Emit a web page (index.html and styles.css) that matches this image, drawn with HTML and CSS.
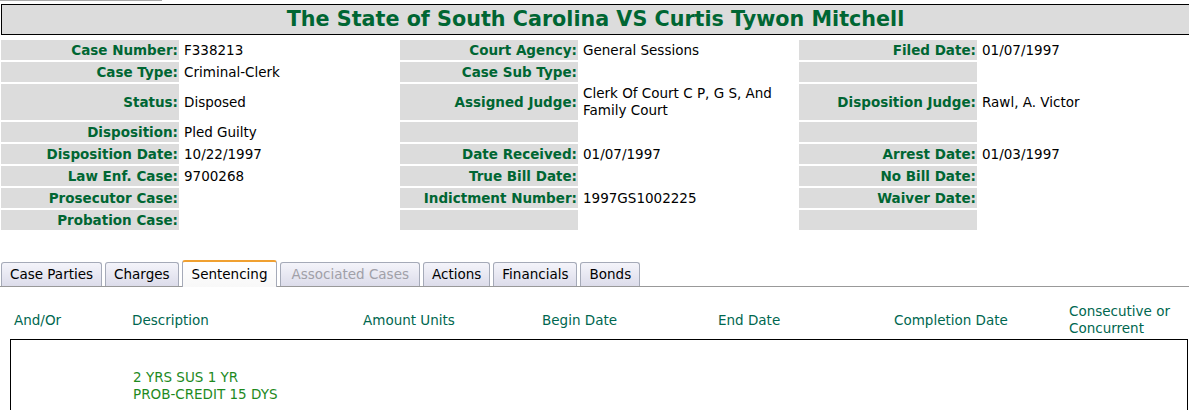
FILE: index.html
```html
<!DOCTYPE html>
<html lang="en">
<head>
    <meta charset="UTF-8">
    <title>Case Details</title>
    <link rel="stylesheet" href="styles.css">
</head>
<body>
    <div class="top-line"></div>
    <h1 class="case-title">The State of South Carolina VS Curtis Tywon Mitchell</h1>

    <div class="details">
        <div class="lbl">Case Number:</div><div class="val">F338213</div>
        <div class="lbl">Court Agency:</div><div class="val">General Sessions</div>
        <div class="lbl">Filed Date:</div><div class="val">01/07/1997</div>

        <div class="lbl">Case Type:</div><div class="val">Criminal-Clerk</div>
        <div class="lbl">Case Sub Type:</div><div class="val"></div>
        <div class="lbl"></div><div class="val"></div>

        <div class="lbl">Status:</div><div class="val">Disposed</div>
        <div class="lbl">Assigned Judge:</div><div class="val">Clerk Of Court C P, G S, And Family Court</div>
        <div class="lbl">Disposition Judge:</div><div class="val">Rawl, A. Victor</div>

        <div class="lbl">Disposition:</div><div class="val">Pled Guilty</div>
        <div class="lbl"></div><div class="val"></div>
        <div class="lbl"></div><div class="val"></div>

        <div class="lbl">Disposition Date:</div><div class="val">10/22/1997</div>
        <div class="lbl">Date Received:</div><div class="val">01/07/1997</div>
        <div class="lbl">Arrest Date:</div><div class="val">01/03/1997</div>

        <div class="lbl">Law Enf. Case:</div><div class="val">9700268</div>
        <div class="lbl">True Bill Date:</div><div class="val"></div>
        <div class="lbl">No Bill Date:</div><div class="val"></div>

        <div class="lbl">Prosecutor Case:</div><div class="val"></div>
        <div class="lbl">Indictment Number:</div><div class="val">1997GS1002225</div>
        <div class="lbl">Waiver Date:</div><div class="val"></div>

        <div class="lbl">Probation Case:</div><div class="val"></div>
        <div class="lbl"></div><div class="val"></div>
        <div class="lbl"></div><div class="val"></div>
    </div>

    <ul class="tabs">
        <li class="tab">Case Parties</li>
        <li class="tab">Charges</li>
        <li class="tab active">Sentencing</li>
        <li class="tab disabled">Associated Cases</li>
        <li class="tab">Actions</li>
        <li class="tab">Financials</li>
        <li class="tab">Bonds</li>
    </ul>

    <div class="sentence-head">
        <div>And/Or</div>
        <div>Description</div>
        <div>Amount Units</div>
        <div>Begin Date</div>
        <div>End Date</div>
        <div>Completion Date</div>
        <div>Consecutive or<br>Concurrent</div>
    </div>

    <div class="sentence-box">
        <div class="sentence-row">
            <div></div>
            <div class="desc">2 YRS SUS 1 YR<br>PROB-CREDIT 15 DYS</div>
        </div>
    </div>
</body>
</html>
```

FILE: styles.css
```css
body {
    margin: 0;
    font-family: 'DejaVu Sans', Verdana, sans-serif;
    font-size: 13.5px;
    color: #000;
    background: #fff;
    overflow: hidden;
}
.top-line {
    width: 162px;
    height: 1px;
    background: #a8a8a8;
}
.case-title {
    margin: 3px -20px 0 1px;
    height: 29px;
    line-height: 29px;
    border: 1px solid #000;
    border-right: none;
    background: #dcdcdc;
    color: #006633;
    font-size: 20.7px;
    font-weight: bold;
    text-align: center;
    padding-right: 20px;
}
.details {
    display: grid;
    grid-template-columns: 178px 217px 178px 217px 178px 1fr;
    gap: 2px;
    margin: 5px 0 0 1px;
}
.lbl {
    background: #dcdcdc;
    color: #006633;
    font-weight: bold;
    text-align: right;
    padding: 0 1px;
    min-height: 20px;
    display: flex;
    align-items: center;
    justify-content: flex-end;
}
.val {
    padding: 1px 3px;
    display: flex;
    align-items: center;
    line-height: 17px;
}
.tabs {
    list-style: none;
    margin: 31px 0 0 0;
    padding: 0 0 0 1px;
    display: flex;
    gap: 3px;
    border-bottom: 1px solid #999;
    height: 25px;
}
.tab {
    height: 23px;
    line-height: 23px;
    padding: 0 8px;
    border: 1px solid #a5aab8;
    border-bottom: none;
    border-radius: 3px 3px 0 0;
    background: linear-gradient(to bottom, #f4f4fa, #dcdcea);
    margin-top: 1px;
}
.tab.active {
    background: linear-gradient(to bottom, #fff, #f8f8f8);
    border-top: 2px solid #f0a030;
    padding: 0 9px;
    height: 25px;
    line-height: 24px;
    margin-top: -1px;
    position: relative;
    z-index: 1;
}
.tab.disabled {
    color: #a0a0a8;
    padding: 0 10px;
}
.sentence-head {
    display: grid;
    grid-template-columns: 118px 231px 179px 176px 176px 175px 1fr;
    align-items: center;
    margin: 16px 0 0 14px;
    color: #00674f;
    line-height: 17px;
}
.sentence-box {
    margin: 2px 0 0 10px;
    border: 1px solid #000;
    width: 1176px;
    height: 80px;
}
.sentence-row {
    display: grid;
    grid-template-columns: 122px 1fr;
    padding-top: 29px;
    line-height: 17px;
}
.desc {
    color: #1e8a1e;
}
```
